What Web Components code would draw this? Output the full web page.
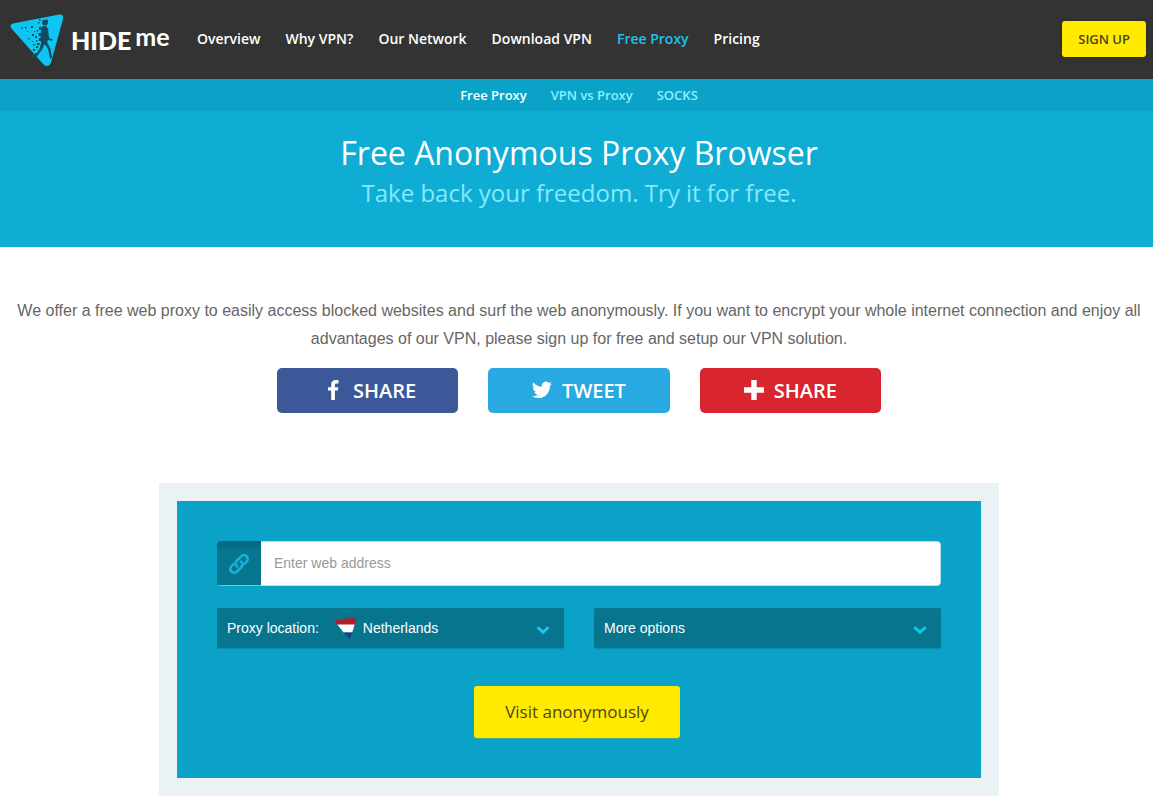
<!DOCTYPE html>
<html lang="en">
<head>
<meta charset="utf-8">
<meta name="viewport" content="width=device-width, initial-scale=1">
<title>Free Anonymous Proxy Browser</title>
<style>
  body { margin: 0; background: #fff; font-family: "Open Sans", "Noto Sans", sans-serif; }
</style>
</head>
<body>
<proxy-page></proxy-page>

<template id="hm-logo">
  <style>
    :host { display: block; }
    a { display: flex; align-items: center; gap: 7px; color: #fff; text-decoration: none; }
    svg { display: block; flex: none; }
    .name { display: flex; align-items: flex-start; }
    .hide { font: 900 25px/28px Lato, sans-serif; }
    .me { margin-left: 4px; font: 700 25px/20px Lato, sans-serif; }
  </style>
  <a href="#" aria-label="HIDE me">
    <svg width="54" height="54" viewBox="0 0 54 54" aria-hidden="true">
      <path d="M3 10.500 L48 1.700 Q54 .5 53 6 L41 49.500 Q38.500 55.500 33.500 51.500 L1.500 15.500 Q-1 11.500 3 10.500Z" fill="#0cc5f2"/>
      <g fill="#124c60">
        <path d="M32.500 7.200l5.200-.7.300 3.600-1.200 2.200-3.200.2-1.400-1.800z"/>
        <path d="M32 13.300l4.200-.3 2 3.200.3 5.800 1.200 3.600 3.100.8-.3 1.400-4.600-.8-.7 2.500 3.400 6.500 1.400 8.500-1.800 1.600-2-9.800-3.400-5.300-3 6-5 6.500-2 .3.400-1.500 4.200-6 1.800-6.200-.8-7.500z"/>
        <path d="M29 14h2.500v3H29zM28.500 20h3v3h-3zM29 25h2v3h-2zM27 30h2.500v2H27zM26 33h2v2h-2zM26.500 17h1.500v1.500h-1.500zM25 23h2v2h-2zM26 27h1.500v1.500H26zM23 36h2v2h-2zM22 21h2v2h-2zM21 13h2v2h-2zM28 9h1.500v1.500H28zM15 14h1.500v1.500H15zM24 18h1v1h-1zM18 25h1.500v1.500H18zM11 14h1.500v1.500H11zM23 31h1.500v1.500H23zM25 40h2v2h-2zM22 42h2v2h-2zM26 44h1.500v1.500H26zM20 38h1.500v1.500H20zM22 28h1v1h-1zM29 6h1.500v1.500H29zM17 18h1v1h-1z"/>
      </g>
    </svg>
    <span class="name"><span class="hide">HIDE</span><span class="me">me</span></span>
  </a>
</template>

<template id="hm-link">
  <style>
    :host { display: block; }
    a { color: var(--link-color, #fff); text-decoration: none; white-space: nowrap; }
  </style>
  <a href="#"><slot></slot></a>
</template>

<template id="hm-header">
  <style>
    :host { display: flex; align-items: center; min-height: 79px; padding: 0 7px 2px 10px; background: #333; box-sizing: border-box; }
    hm-logo { flex: none; width: 160px; padding-top: 2px; }
    nav { display: flex; flex: 1; gap: 25px; margin-left: 27px; font-size: 14px; font-weight: 600; line-height: 20px; }
    .current { --link-color: #1fc0ee; }
    button { height: 36px; padding: 0 16px; border: 0; border-radius: 3px; background: #ffea00; color: #4a4520; font: 600 13px/20px "Open Sans", sans-serif; box-shadow: 0 0 2px #222; }
  </style>
  <hm-logo></hm-logo>
  <nav aria-label="Main">
    <hm-link>Overview</hm-link>
    <hm-link>Why VPN?</hm-link>
    <hm-link>Our Network</hm-link>
    <hm-link>Download VPN</hm-link>
    <hm-link class="current">Free Proxy</hm-link>
    <hm-link>Pricing</hm-link>
  </nav>
  <button type="button">SIGN UP</button>
</template>

<template id="hm-subnav">
  <style>
    :host { display: block; padding-left: 5px; background: #0aa3c7; }
    nav { display: flex; justify-content: center; gap: 24px; font-size: 13px; line-height: 32px; font-weight: 600; --link-color: #8ceeff; }
    .current { --link-color: #fff; }
  </style>
  <nav aria-label="Proxy">
    <hm-link class="current">Free Proxy</hm-link>
    <hm-link>VPN vs Proxy</hm-link>
    <hm-link>SOCKS</hm-link>
  </nav>
</template>

<template id="hm-hero">
  <style>
    :host { display: block; padding: 20px 0 36px 5px; background: #0fadd4; text-align: center; }
    h1 { margin: 0; color: #fff; font-size: 32px; font-weight: 400; line-height: 44px; }
    p { margin: 0; color: #85e9fc; font-size: 24px; line-height: 36px; }
  </style>
  <h1><slot name="title"></slot></h1>
  <p><slot></slot></p>
</template>

<template id="hm-share">
  <style>
    :host { display: block; }
    button { display: flex; align-items: center; justify-content: center; gap: 10px; width: 100%; height: 45px; padding: 0; border: 0; border-radius: 5px; background: var(--share-color); color: #fff; font: 600 20px/28px "Open Sans", sans-serif; }
    ::slotted(svg) { display: block; margin-bottom: 2px; }
  </style>
  <button type="button"><slot name="icon"></slot><span><slot></slot></span></button>
</template>

<template id="hm-chevron">
  <style>
    :host { display: block; flex: none; pointer-events: none; }
    svg { display: block; }
  </style>
  <svg width="14" height="10" viewBox="0 0 14 10" aria-hidden="true"><path d="M1.500 2.200L7 7.300 12.500 2.200" fill="none" stroke="#14c8f0" stroke-width="2.900"/></svg>
</template>

<template id="hm-proxy-form">
  <style>
    :host { display: block; width: 100%; max-width: 840px; box-sizing: border-box; padding: 18px; background: #eaf2f5; font-family: "Liberation Sans", Arial, sans-serif; }
    form { display: grid; grid-template-columns: 1fr 1fr; column-gap: 30px; padding: 40px; background: #0aa3c7; }
    .address { grid-column: 1 / -1; display: flex; height: 45px; margin-bottom: 22px; border-radius: 4px; overflow: hidden; }
    .address label { display: flex; align-items: center; justify-content: center; width: 44px; background: linear-gradient(#066c85 7px, #08758f 9px); border-bottom: 1px solid #7cc4d8; box-sizing: border-box; }
    input { flex: 1; min-width: 0; padding: 0 12px 2px 13px; border: 1px solid #b7dfea; border-left: 0; border-radius: 0 4px 4px 0; background: #fff; color: #555; font: 14px "Liberation Sans", Arial, sans-serif; outline: 0; }
    input::placeholder { color: #999; opacity: 1; }
    .box { display: flex; align-items: center; box-sizing: border-box; height: 40px; padding: 0 14px 0 10px; border: 0; border-radius: 2px; background: #08758f; box-shadow: 0 1px 1px #078cac; color: #fff; font: 14px/20px "Liberation Sans", Arial, sans-serif; text-align: left; }
    .box svg { margin: 0 6px 0 15px; }
    .box > span { flex: 1; }
    hm-chevron { margin-top: 3px; }
    select { flex: 1; min-width: 0; height: 40px; padding: 0; border: 0; appearance: none; background: transparent; color: inherit; font: inherit; outline: 0; }
    .submit { grid-column: 1 / -1; justify-self: center; width: 206px; height: 52px; margin: 38px 4px 0 0; padding: 0; border: 0; border-radius: 3px; background: #ffea00; color: #4a4520; font: 400 17px/24px "Open Sans", sans-serif; box-shadow: 0 1px 1px #4ba88a; }
  </style>
  <form>
    <div class="address">
      <label for="url" aria-label="Web address">
        <svg width="24" height="24" viewBox="0 0 24 24" fill="none" stroke="#1ab3d6" stroke-width="2.500" aria-hidden="true">
          <g transform="translate(0 1) rotate(-45 12 12)">
            <path d="M9.500 13.500C8 10.500 9.500 8.200 12.500 8.200H19a3.800 3.800 0 0 1 0 7.600h-4"/>
            <path d="M14.500 10.500C16 13.500 14.500 15.800 11.500 15.800H5a3.800 3.800 0 0 1 0-7.600h4"/>
          </g>
        </svg>
      </label>
      <input id="url" type="text" placeholder="Enter web address">
    </div>
    <div class="box">
      <label for="location">Proxy location:</label>
      <svg width="23" height="22" viewBox="0 0 23 22" aria-hidden="true">
        <path d="M0 3.500L22.500 0 20.500 8H3.800z" fill="#b01f2c"/>
        <path d="M3.300 7.500H20.600L18.200 15.500H9.700z" fill="#fff"/>
        <path d="M9.700 15.500H18.200L16 22z" fill="#1c3c91"/>
      </svg>
      <select id="location"><option>Netherlands</option></select>
      <hm-chevron></hm-chevron>
    </div>
    <button class="box" type="button" aria-expanded="false"><span>More options</span><hm-chevron></hm-chevron></button>
    <button class="submit" type="button">Visit anonymously</button>
  </form>
</template>

<template id="proxy-page">
  <style>
    :host { display: block; }
    main { display: flex; flex-direction: column; align-items: center; padding: 50px 10px 12px 15px; }
    .intro { margin: 0 0 15px; color: #666; font: 16px/28px "Liberation Sans", Arial, sans-serif; text-align: center; }
    .shares { display: grid; grid-template-columns: repeat(3, 1fr); gap: 30px; width: 100%; max-width: 604px; margin-bottom: 70px; }
    .facebook { --share-color: #3b5998; }
    .twitter { --share-color: #29a9e1; }
    .plus { --share-color: #d9252f; }
  </style>
  <header><hm-header></hm-header><hm-subnav></hm-subnav></header>
  <hm-hero><span slot="title">Free Anonymous Proxy Browser</span>Take back your freedom. Try it for free.</hm-hero>
  <main>
    <p class="intro">We offer a free web proxy to easily access blocked websites and surf the web anonymously. If you want to encrypt your whole internet connection and enjoy all advantages of our VPN, please sign up for free and setup our VPN solution.</p>
    <div class="shares">
      <hm-share class="facebook">
        <svg slot="icon" width="24" height="20" viewBox="0 0 24 20" aria-hidden="true"><path d="M19.500.2v3.200h-1.900c-1.400 0-1.700.7-1.700 1.700v2.100h3.400l-.5 3.300h-2.900V20h-3.700v-9.500H9V7.200h3.200V4.600C12.200 1.600 14 0 16.700 0c1.300 0 2.400.1 2.800.2z" fill="#fff"/></svg>SHARE
      </hm-share>
      <hm-share class="twitter">
        <svg slot="icon" width="20" height="18" viewBox="0 0 24 20" aria-hidden="true"><path d="M24 2.400a9.800 9.800 0 0 1-2.800.8A5 5 0 0 0 23.300.500a9.900 9.900 0 0 1-3.100 1.200 4.900 4.900 0 0 0-8.400 4.500A14 14 0 0 1 1.700 1a4.900 4.900 0 0 0 1.500 6.600A4.900 4.900 0 0 1 1 7v.1a4.900 4.900 0 0 0 3.900 4.800 5 5 0 0 1-2.200.1 4.900 4.900 0 0 0 4.600 3.400A9.900 9.900 0 0 1 0 17.500a14 14 0 0 0 7.500 2.200c9.100 0 14-7.500 14-14v-.8A10 10 0 0 0 24 2.400z" fill="#fff"/></svg>TWEET
      </hm-share>
      <hm-share class="plus">
        <svg slot="icon" width="20" height="20" viewBox="0 0 20 20" aria-hidden="true"><path d="M7.300 0h5.400v7.300H20v5.400h-7.300V20H7.300v-7.300H0V7.300h7.300z" fill="#fff"/></svg>SHARE
      </hm-share>
    </div>
    <hm-proxy-form></hm-proxy-form>
  </main>
</template>

<script>
  class TemplateElement extends HTMLElement {
    constructor() {
      super();
      this.attachShadow({ mode: "open" })
        .append(document.getElementById(this.localName).content.cloneNode(true));
    }
  }
  for (const name of ["hm-logo", "hm-link", "hm-header", "hm-subnav", "hm-hero", "hm-share", "hm-chevron", "hm-proxy-form", "proxy-page"]) {
    customElements.define(name, class extends TemplateElement {});
  }
</script>
</body>
</html>
